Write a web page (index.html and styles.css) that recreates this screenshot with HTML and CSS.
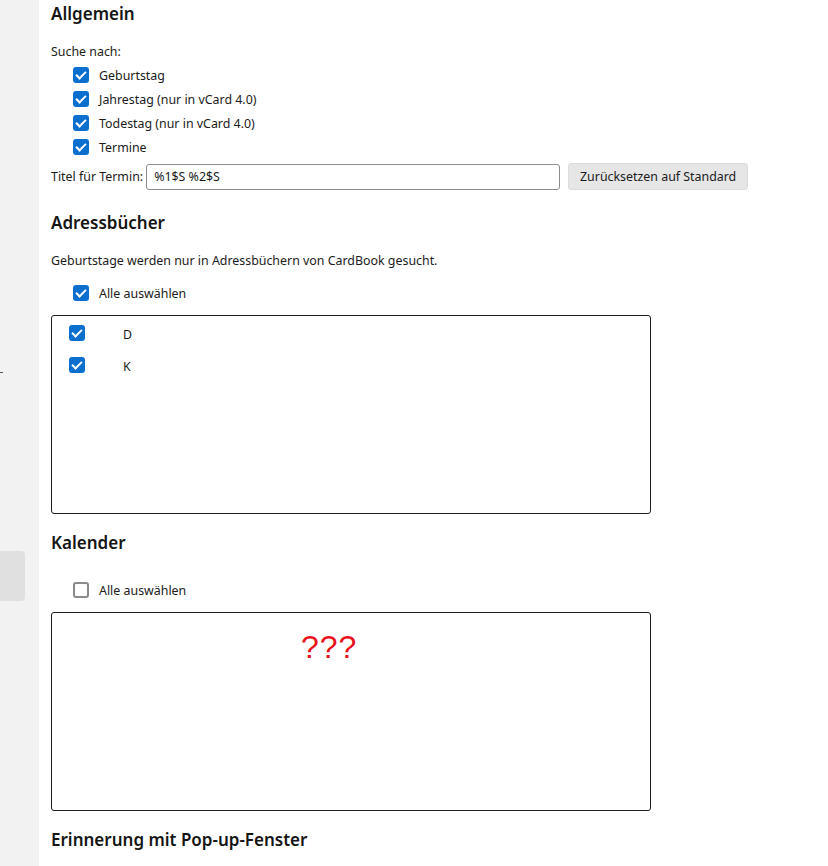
FILE: index.html
```html
<!DOCTYPE html>
<html lang="de">
<head>
<meta charset="utf-8">
<link rel="stylesheet" href="styles.css">
</head>
<body>
<div class="page">
  <aside class="sidebar">
    <div class="side-dash"></div>
    <div class="side-item"></div>
  </aside>
  <main class="main">
    <h2 class="heading h-first">Allgemein</h2>
    <div class="text t-search">Suche nach:</div>
    <div class="checks">
      <label class="check-row"><span class="cb checked"></span><span>Geburtstag</span></label>
      <label class="check-row"><span class="cb checked"></span><span>Jahrestag (nur in vCard 4.0)</span></label>
      <label class="check-row"><span class="cb checked"></span><span>Todestag (nur in vCard 4.0)</span></label>
      <label class="check-row"><span class="cb checked"></span><span>Termine</span></label>
    </div>
    <div class="title-row">
      <span class="text">Titel für Termin:</span>
      <div class="input">%1$S %2$S</div>
      <div class="button">Zurücksetzen auf Standard</div>
    </div>

    <h2 class="heading h-addr">Adressbücher</h2>
    <div class="text t-desc">Geburtstage werden nur in Adressbüchern von CardBook gesucht.</div>
    <label class="check-row select-all sa-1"><span class="cb checked"></span><span>Alle auswählen</span></label>
    <div class="list-box box-1">
      <div class="list-row"><span class="cb checked"></span><span class="list-label">D</span></div>
      <div class="list-row"><span class="cb checked"></span><span class="list-label">K</span></div>
    </div>

    <h2 class="heading h-cal">Kalender</h2>
    <label class="check-row select-all sa-2"><span class="cb"></span><span>Alle auswählen</span></label>
    <div class="list-box box-2">
      <div class="unknown">???</div>
    </div>

    <h2 class="heading h-remind">Erinnerung mit Pop-up-Fenster</h2>
  </main>
</div>
</body>
</html>
```
FILE: styles.css
```css
* { box-sizing: border-box; }
html, body { margin: 0; padding: 0; background: #ffffff; }
body {
  font-family: "Noto Sans", "Open Sans", sans-serif;
  font-size: 12.4px;
  color: #1b1b1b;
  height: 866px;
  overflow: hidden;
}
.page { display: flex; min-height: 866px; }
.sidebar {
  width: 39px;
  flex: 0 0 39px;
  background: #f2f2f2;
  display: flex;
  flex-direction: column;
}
.side-dash {
  margin-top: 372px;
  width: 3px;
  height: 1px;
  background: #555;
}
.side-item {
  margin-top: 178px;
  width: 25px;
  height: 50px;
  background: #e0e0e0;
  border-radius: 0 4px 4px 0;
}
.main {
  flex: 1;
  padding-left: 12px;
  display: flex;
  flex-direction: column;
  align-items: flex-start;
}
.heading {
  margin: 0;
  font-size: 17px;
  font-weight: 600;
  line-height: 24px;
  color: #151515;
}
.h-first { margin-top: 2px; }
.h-addr { margin-top: 21px; }
.h-cal { margin-top: 17px; }
.h-remind { margin-top: 17px; }
.text { line-height: 20px; }
.t-search { margin-top: 16px; }
.t-desc { margin-top: 16px; }
.checks { display: flex; flex-direction: column; padding-left: 22px; margin-top: 1px; }
.check-row {
  display: flex;
  align-items: center;
  height: 24px;
  gap: 10px;
}
.select-all { padding-left: 22px; }
.sa-1 { margin-top: 10px; }
.sa-2 { margin-top: 23px; }
.cb {
  width: 16px;
  height: 16px;
  border: 2px solid #8a8a8a;
  border-radius: 3px;
  background: #fff;
  flex: 0 0 16px;
  position: relative;
}
.cb.checked {
  background: #0b6fcf;
  border-color: #0b6fcf;
}
.cb.checked::after {
  content: "";
  position: absolute;
  left: 3px;
  top: 0px;
  width: 4px;
  height: 8px;
  border: solid #fff;
  border-width: 0 2px 2px 0;
  transform: rotate(45deg);
}
.title-row {
  display: flex;
  align-items: center;
  margin-top: 4px;
  height: 27px;
}
.input {
  margin-left: 3px;
  width: 414px;
  height: 26px;
  border: 1px solid #8d8d8d;
  border-radius: 3px;
  padding: 0 7px;
  line-height: 24px;
}
.button {
  margin-left: 8px;
  width: 180px;
  height: 27px;
  background: #e6e6e6;
  border: 1px solid #dcdcdc;
  border-radius: 3px;
  line-height: 25px;
  text-align: center;
}
.list-box {
  width: 600px;
  height: 199px;
  border: 1px solid #1e1e1e;
  border-radius: 3px;
}
.box-1 { margin-top: 10px; padding-left: 17px; padding-top: 1px; }
.box-2 { margin-top: 10px; }
.list-row {
  display: flex;
  align-items: center;
  height: 32px;
}
.list-label { margin-left: 38px; padding-top: 2px; }
.unknown {
  margin-top: 17px;
  margin-left: 249px;
  font-family: "Liberation Sans", Arial, sans-serif;
  font-size: 32px;
  line-height: 34px;
  color: #e8101a;
  letter-spacing: 1px;
}
```
